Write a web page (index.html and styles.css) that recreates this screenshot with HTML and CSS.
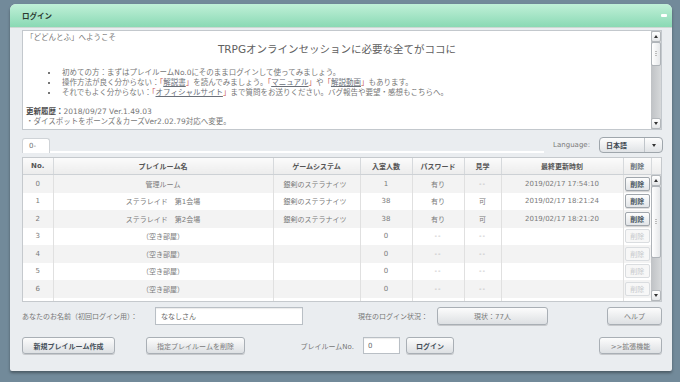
FILE: index.html
```html
<!DOCTYPE html>
<html lang="ja">
<head>
  <meta charset="UTF-8">
  <title>ログイン</title>
  <link rel="stylesheet" href="styles.css">
</head>
<body>
  <div class="window">
    <div class="title-bar">
      <span class="title">ログイン</span>
      <span class="minimize"></span>
    </div>

    <div class="content">
      <!-- お知らせ -->
      <div class="info-box">
        <div class="info-text">
          <p class="welcome">「どどんとふ」へようこそ</p>
          <h1>TRPGオンラインセッションに必要な全てがココに</h1>
          <ul>
            <li>初めての方：まずはプレイルームNo.0にそのままログインして使ってみましょう。</li>
            <li>操作方法が良く分からない：<span class="br">「</span><a>解説書</a><span class="br">」</span>を読んでみましょう。<span class="br">「</span><a>マニュアル</a><span class="br">」</span>や<span class="br">「</span><a>解説動画</a><span class="br">」</span>もあります。</li>
            <li>それでもよく分からない：<span class="br">「</span><a>オフィシャルサイト</a><span class="br">」</span>まで質問をお送りください。バグ報告や要望・感想もこちらへ。</li>
          </ul>
          <p class="history"><b>更新履歴：</b>2018/09/27 Ver.1.49.03</p>
          <p>・ダイスボットをボーンズ＆カーズVer2.02.79対応へ変更。</p>
        </div>
        <div class="scrollbar">
          <div class="sb-btn"><span class="arrow-up"></span></div>
          <div class="sb-thumb short"></div>
          <div class="sb-track"></div>
          <div class="sb-btn"><span class="arrow-down"></span></div>
        </div>
      </div>

      <!-- タブと言語 -->
      <div class="tabs">
        <div class="tab">0-</div>
        <div class="tab-line"></div>
        <span class="lang-label">Language:</span>
        <div class="lang-select">
          <span class="lang-value">日本語</span>
          <span class="lang-arrow"><span class="arrow-down"></span></span>
        </div>
      </div>

      <!-- プレイルーム一覧 -->
      <div class="list">
        <div class="grid">
          <table class="rooms">
            <colgroup>
              <col style="width:30px"><col style="width:220px"><col style="width:87px"><col style="width:52px">
              <col style="width:52px"><col style="width:37px"><col style="width:122px"><col style="width:28px">
            </colgroup>
            <thead>
              <tr>
                <th>No.</th><th>プレイルーム名</th><th>ゲームシステム</th><th>入室人数</th>
                <th>パスワード</th><th>見学</th><th>最終更新時刻</th><th class="del-head">削除</th>
              </tr>
            </thead>
            <tbody>
              <tr>
                <td>0</td><td>管理ルーム</td><td class="system">銀剣のステラナイツ</td><td>1</td>
                <td>有り</td><td class="dash">--</td><td>2019/02/17 17:54:10</td>
                <td><button class="del">削除</button></td>
              </tr>
              <tr>
                <td>1</td><td>ステラレイド　第1会場</td><td class="system">銀剣のステラナイツ</td><td>38</td>
                <td>有り</td><td>可</td><td>2019/02/17 18:21:24</td>
                <td><button class="del">削除</button></td>
              </tr>
              <tr>
                <td>2</td><td>ステラレイド　第2会場</td><td class="system">銀剣のステラナイツ</td><td>38</td>
                <td>有り</td><td>可</td><td>2019/02/17 18:21:20</td>
                <td><button class="del">削除</button></td>
              </tr>
              <tr>
                <td>3</td><td>（空き部屋）</td><td class="system"></td><td>0</td>
                <td class="dash">--</td><td class="dash">--</td><td></td>
                <td><button class="del off">削除</button></td>
              </tr>
              <tr>
                <td>4</td><td>（空き部屋）</td><td class="system"></td><td>0</td>
                <td class="dash">--</td><td class="dash">--</td><td></td>
                <td><button class="del off">削除</button></td>
              </tr>
              <tr>
                <td>5</td><td>（空き部屋）</td><td class="system"></td><td>0</td>
                <td class="dash">--</td><td class="dash">--</td><td></td>
                <td><button class="del off">削除</button></td>
              </tr>
              <tr>
                <td>6</td><td>（空き部屋）</td><td class="system"></td><td>0</td>
                <td class="dash">--</td><td class="dash">--</td><td></td>
                <td><button class="del off">削除</button></td>
              </tr>
              <tr>
                <td></td><td></td><td class="system"></td><td></td>
                <td></td><td></td><td></td><td></td>
              </tr>
            </tbody>
          </table>
        </div>
        <div class="list-scroll">
          <div class="corner"></div>
          <div class="scrollbar">
            <div class="sb-btn"><span class="arrow-up"></span></div>
            <div class="sb-thumb long"></div>
            <div class="sb-track"></div>
            <div class="sb-btn"><span class="arrow-down"></span></div>
          </div>
        </div>
      </div>

      <!-- 名前と状況 -->
      <div class="form-row name-row">
        <span class="label name-label">あなたのお名前（初回ログイン用）：</span>
        <input class="text-input name-input" type="text" value="ななしさん">
        <span class="label status-label">現在のログイン状況：</span>
        <button class="btn status-btn">現状：77人</button>
        <button class="btn help-btn">ヘルプ</button>
      </div>

      <!-- 操作ボタン -->
      <div class="form-row action-row">
        <button class="btn strong create-btn">新規プレイルーム作成</button>
        <button class="btn remove-btn">指定プレイルームを削除</button>
        <span class="label no-label">プレイルームNo.</span>
        <input class="text-input no-input" type="text" value="0">
        <button class="btn strong login-btn">ログイン</button>
        <button class="btn ext-btn">&gt;&gt;拡張機能</button>
      </div>
    </div>
  </div>
</body>
</html>
```

FILE: styles.css
```css
body {
  margin: 0;
  height: 382px;
  overflow: hidden;
  background: #728a9a;
  font-family: "DejaVu Sans", "Noto Sans CJK JP", sans-serif;
  font-size: 7px;
  color: #747474;
}

.window {
  width: 662px;
  height: 367px;
  margin: 4px 0 0 10px;
  background: #eaedf0;
  border-radius: 6px 6px 2px 2px;
  box-shadow: 0 2px 3px rgba(0,0,0,0.35);
  display: flex;
  flex-direction: column;
}

.title-bar {
  height: 23px;
  display: flex;
  align-items: center;
  justify-content: space-between;
  padding: 0 5px 0 12px;
  background: linear-gradient(#c0f0d8, #8ad9b4);
  border-radius: 6px 6px 0 0;
  border-bottom: 1px solid #cdd8d3;
}

.title {
  font-family: "Noto Sans CJK JP", sans-serif;
  font-weight: bold;
  font-size: 7.5px;
  color: #2b3a31;
}

.minimize {
  width: 6px;
  height: 3px;
  background: #fff;
  border-radius: 1px;
}

.content {
  flex: 1;
  padding: 0 10px 0 12px;
  display: flex;
  flex-direction: column;
}

/* info box */
.info-box {
  margin-top: 2px;
  height: 100px;
  box-sizing: border-box;
  border: 1px solid #c3c8cd;
  background: #fff;
  display: flex;
}

.info-text {
  flex: 1;
  padding: 2px 3px;
  font-size: 7.5px;
  color: #777;
}

.info-text p {
  margin: 0;
  line-height: 10px;
}

.info-text h1 {
  margin: 0;
  font-size: 10.5px;
  font-weight: normal;
  line-height: 12px;
  text-align: center;
  color: #606060;
}

.info-text ul {
  margin: 13px 0 0;
  padding-left: 33px;
  list-style: square;
}

.info-text li {
  line-height: 10px;
  padding-left: 3px;
}

.info-text a {
  color: #6a6f78;
  text-decoration: underline;
}

.info-text .br {
  color: #c85050;
}

.info-text .history {
  margin-top: 9px;
}

.history b {
  color: #4d4d4d;
}

/* scrollbars */
.scrollbar {
  width: 10px;
  display: flex;
  flex-direction: column;
  background: linear-gradient(to right, #bfc2c5, #d6d8da);
}

.sb-btn {
  height: 9px;
  border: 1px solid #b3b7bb;
  border-radius: 2px;
  background: linear-gradient(#ffffff, #e4e6e8);
  display: flex;
  align-items: center;
  justify-content: center;
}

.arrow-up, .arrow-down {
  width: 0;
  height: 0;
  border-left: 2px solid transparent;
  border-right: 2px solid transparent;
}

.arrow-up {
  border-bottom: 3px solid #333;
}

.arrow-down {
  border-top: 3px solid #333;
}

.sb-thumb {
  box-sizing: border-box;
  border: 1px solid #aeb3b8;
  border-radius: 2px;
  background: linear-gradient(to right, #ffffff, #e6e8ea);
  position: relative;
}

.sb-thumb::after {
  content: "";
  position: absolute;
  left: 3px;
  right: 3px;
  top: 50%;
  height: 5px;
  margin-top: -3px;
  background: repeating-linear-gradient(#bbb 0 1px, transparent 1px 2px);
}

.sb-thumb.short {
  height: 24px;
}

.sb-thumb.long {
  height: 72px;
}

.sb-track {
  flex: 1;
}

/* tabs */
.tabs {
  margin-top: 7px;
  height: 16px;
  display: flex;
  align-items: flex-end;
}

.tab {
  width: 28px;
  height: 15px;
  box-sizing: border-box;
  padding: 3px 0 0 6px;
  background: #fff;
  border: 1px solid #cfd3d7;
  border-bottom: none;
  border-radius: 3px 3px 0 0;
}

.tab-line {
  flex: 1;
  height: 2px;
  background: #fff;
}

.lang-label {
  align-self: center;
  margin: 0 9px;
  color: #7a7a7a;
}

.lang-select {
  width: 64px;
  height: 16px;
  box-sizing: border-box;
  border: 1px solid #9fa6ac;
  border-radius: 4px;
  background: linear-gradient(#fdfdfd, #e0e3e6);
  display: flex;
  align-items: center;
  margin-right: -1px;
}

.lang-value {
  flex: 1;
  padding-left: 6px;
  font-weight: bold;
  color: #3f4850;
}

.lang-arrow {
  width: 17px;
  height: 100%;
  border-left: 1px solid #c0c5ca;
  display: flex;
  align-items: center;
  justify-content: center;
}

/* room list */
.list {
  margin-top: 4px;
  height: 145px;
  box-sizing: border-box;
  border: 1px solid #c5c9cd;
  background: #fff;
  display: flex;
}

.grid {
  width: 628px;
  overflow: hidden;
}

.rooms {
  width: 628px;
  table-layout: fixed;
  border-collapse: collapse;
}

.rooms th {
  height: 16px;
  padding: 0;
  border-left: 1px solid #d6d9dc;
  border-bottom: 1px solid #cdd1d5;
  background: linear-gradient(#fbfbfb, #ececec);
  font-weight: bold;
  color: #555;
}

.rooms th:first-child, .rooms td:first-child {
  border-left: none;
}

.rooms th.del-head {
  color: #6a737c;
}

.rooms td {
  height: 17.5px;
  padding: 0;
  border-left: 1px solid #e0e0e0;
  text-align: center;
  white-space: nowrap;
  color: #7a7a7a;
}

.rooms tbody tr:nth-child(odd) {
  background: #f3f3f3;
}

.rooms td.system {
  text-align: left;
  padding-left: 10px;
}

.rooms td.dash {
  color: #aaa;
  letter-spacing: 1px;
}

.del {
  width: 25px;
  height: 14px;
  padding: 0;
  border: 1px solid #a0a6ac;
  border-radius: 2px;
  background: linear-gradient(#fdfdfd, #e2e5e8);
  font: inherit;
  font-weight: bold;
  color: #4b5762;
  box-shadow: 0 1px 0 rgba(0,0,0,0.12);
}

.del.off {
  border-color: #dadde0;
  background: #f7f7f7;
  color: #c6c9cc;
  font-weight: normal;
  box-shadow: none;
}

.list-scroll {
  flex: 1;
  display: flex;
  flex-direction: column;
}

.list-scroll .corner {
  height: 16px;
  border-left: 1px solid #d6d9dc;
  border-bottom: 1px solid #cdd1d5;
  background: linear-gradient(#fbfbfb, #ececec);
}

.list-scroll .scrollbar {
  flex: 1;
  width: auto;
}

/* forms */
.form-row {
  display: flex;
  align-items: center;
}

.name-row {
  margin-top: 5px;
  height: 18px;
}

.action-row {
  margin-top: 12px;
  height: 17px;
}

.label {
  color: #767676;
  white-space: nowrap;
}

.btn {
  height: 100%;
  box-sizing: border-box;
  padding: 0;
  border: 1px solid #a9afb5;
  border-radius: 3px;
  background: linear-gradient(#fcfcfc, #dde0e3);
  font: inherit;
  color: #7a7a7a;
  box-shadow: 0 1px 0 rgba(0,0,0,0.15);
}

.btn.strong {
  font-weight: bold;
  color: #46505a;
}

.text-input {
  height: 100%;
  box-sizing: border-box;
  border: 1px solid #b9bfc5;
  background: #fff;
  padding: 0 4px;
  font: inherit;
  color: #6a6a6a;
  box-shadow: inset 0 1px 1px rgba(0,0,0,0.08);
}

.name-label {
  width: 133px;
}

.name-input {
  width: 148px;
  padding-left: 5px;
}

.status-label {
  width: 134px;
  text-align: right;
  padding-right: 9px;
  box-sizing: border-box;
}

.status-btn {
  width: 111px;
}

.help-btn {
  width: 55px;
  margin-left: auto;
}

.create-btn {
  width: 93px;
}

.remove-btn {
  width: 99px;
  margin-left: 31px;
}

.no-label {
  width: 118px;
  text-align: right;
  padding-right: 9px;
  box-sizing: border-box;
}

.no-input {
  width: 37px;
}

.login-btn {
  width: 48px;
  margin-left: 6px;
}

.ext-btn {
  width: 63px;
  margin-left: auto;
}
```
